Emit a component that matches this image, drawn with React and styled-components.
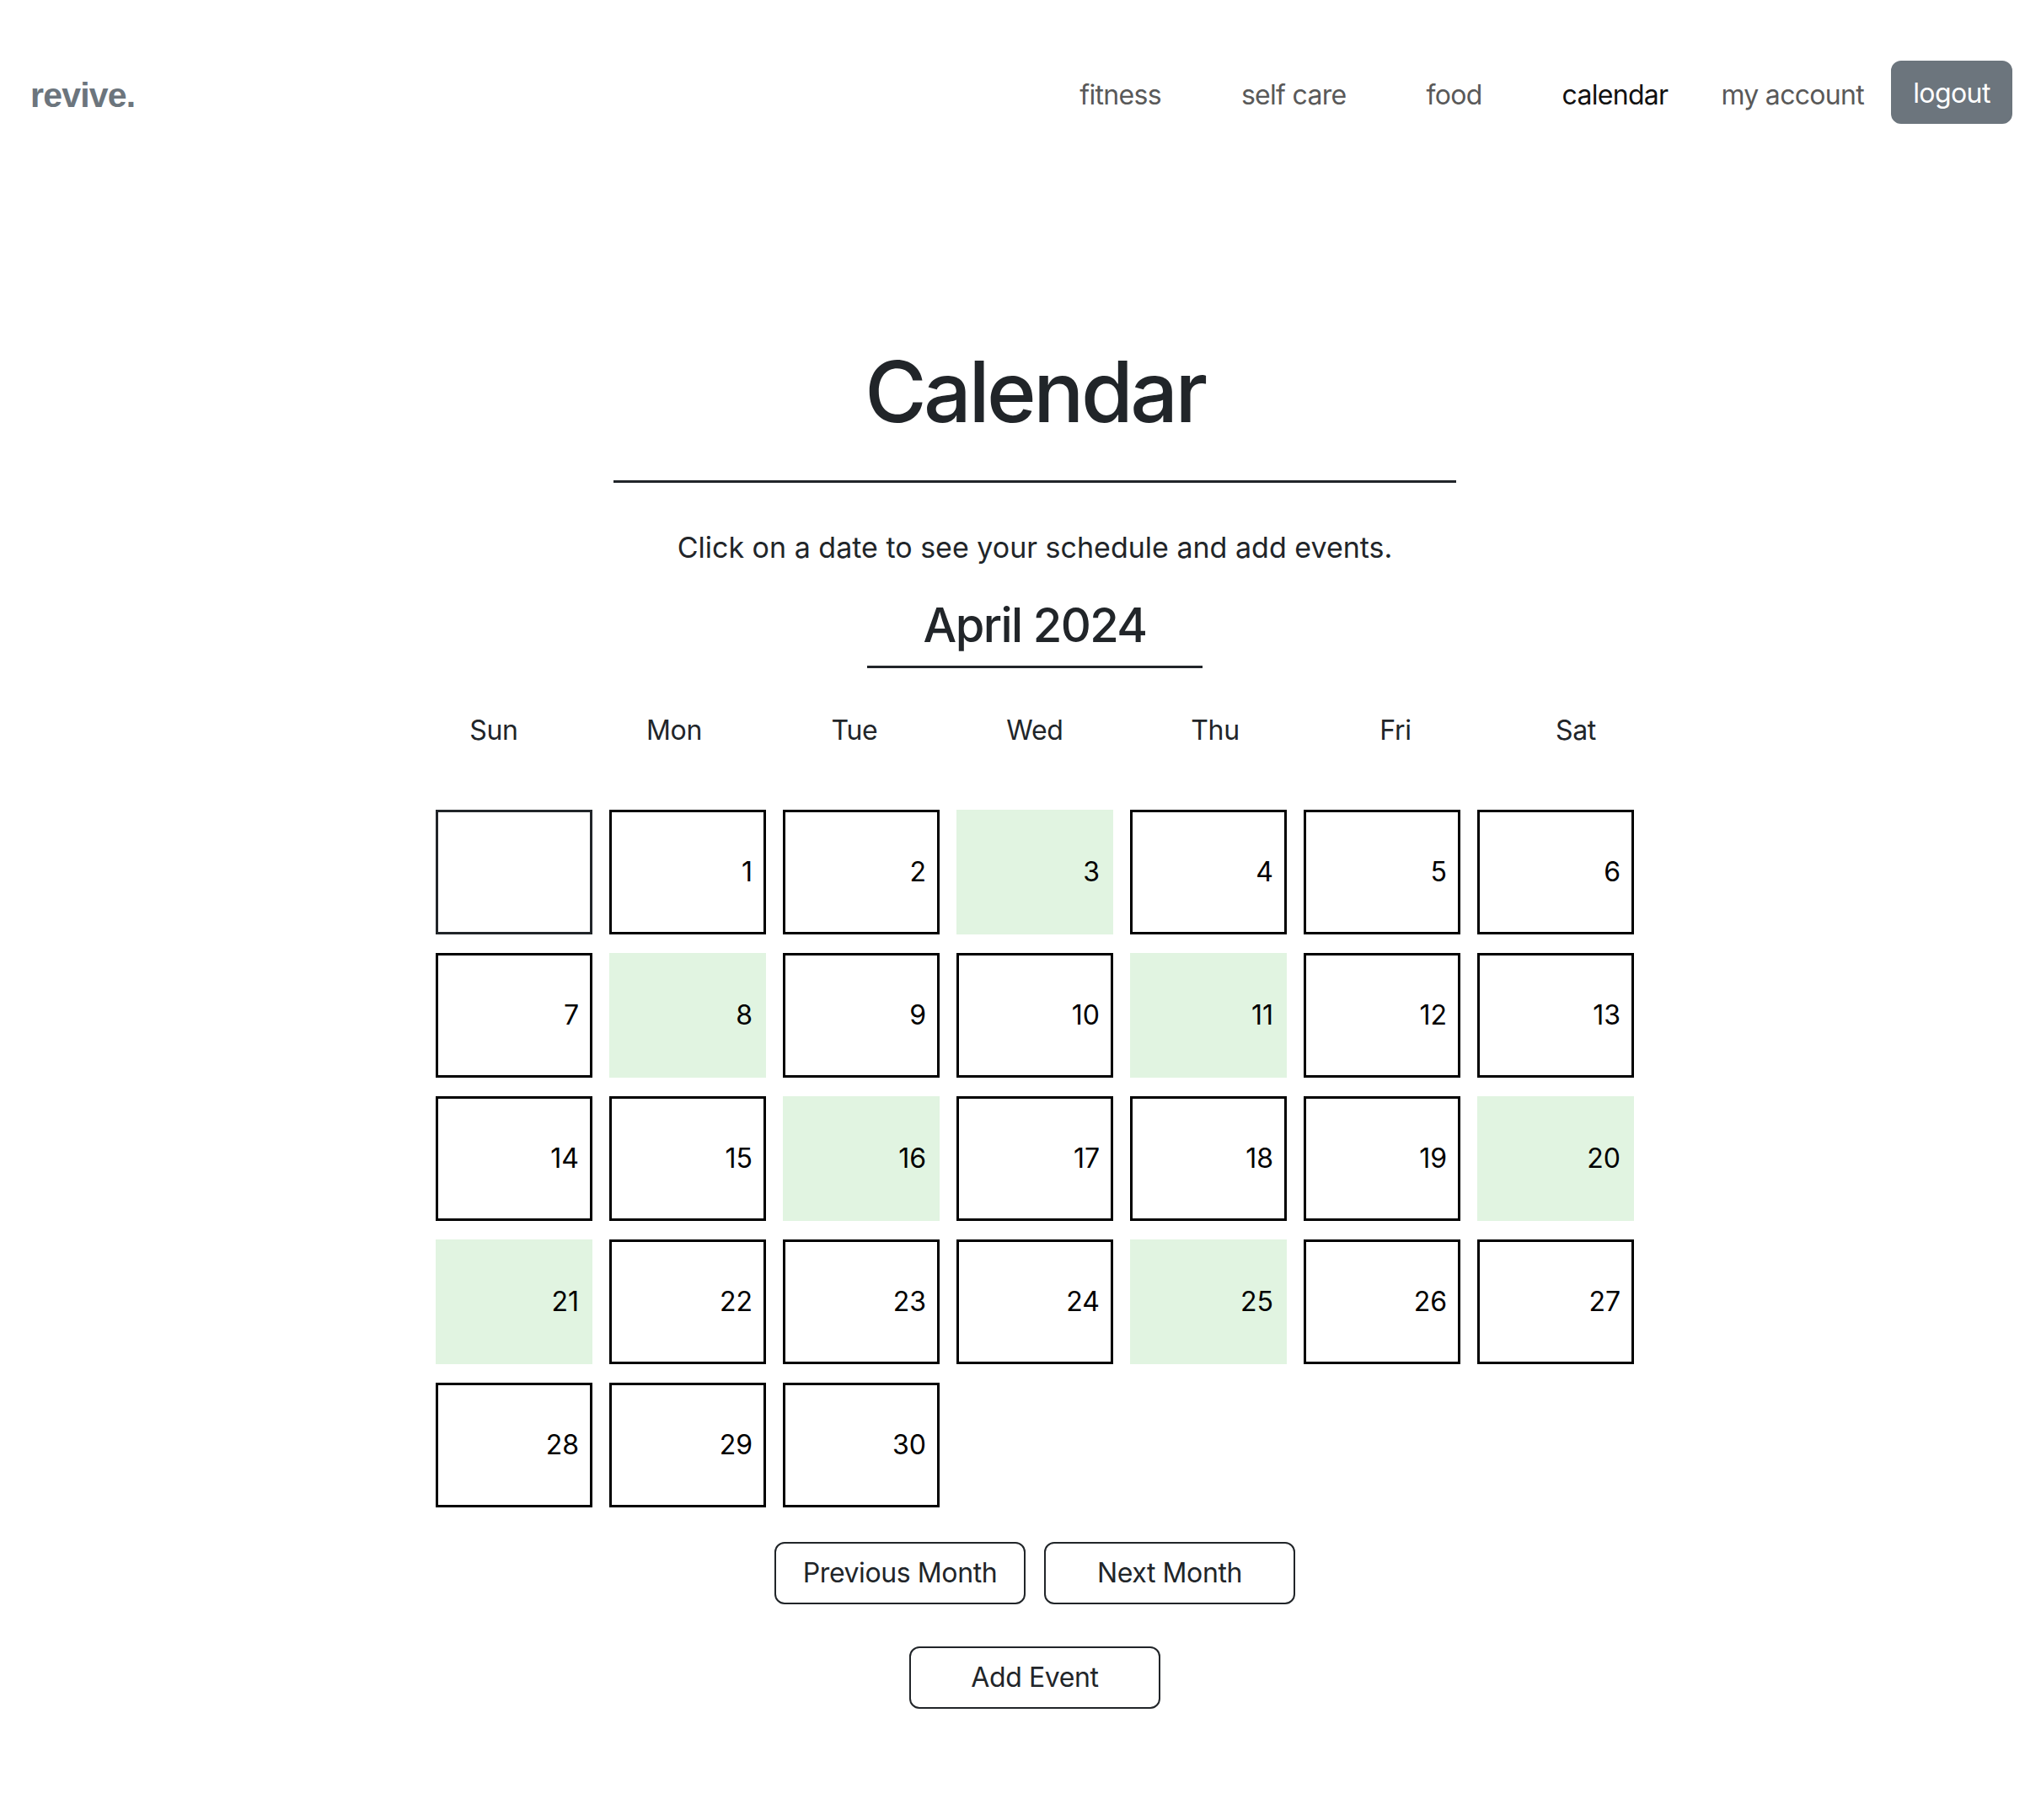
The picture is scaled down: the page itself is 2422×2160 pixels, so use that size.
import React from "react";
import styled, { createGlobalStyle } from "styled-components";

const Global = createGlobalStyle`
  html, body { margin: 0; padding: 0; background: #fff; }
  body {
    font-family: Inter, "Noto Sans", "Liberation Sans", sans-serif;
    color: #212529;
    font-size: 32px;
    line-height: 1.5;
  }
  * { box-sizing: border-box; }
`;

const Page = styled.div`
  width: 2422px;
  min-height: 2160px;
`;

const Navbar = styled.nav`
  display: flex;
  align-items: center;
  justify-content: space-between;
  padding: 72px 34px 0 36px;
`;

const Brand = styled.a`
  font-family: "Liberation Sans", Arial, sans-serif;
  font-weight: 700;
  font-size: 41px;
  letter-spacing: -0.8px;
  color: #6c757d;
  text-decoration: none;
  line-height: 1;
  margin-top: 8px;
`;

const NavList = styled.ul`
  display: flex;
  align-items: center;
  list-style: none;
  margin: 0;
  padding: 0;
`;

const NavItem = styled.li`
  margin-right: ${(p) => p.$after}px;
  padding-top: ${(p) => (p.$button ? 0 : 7)}px;
`;

const NavLink = styled.a`
  font-size: 32px;
  letter-spacing: -0.7px;
  color: ${(p) => (p.$active ? "#111" : "#595959")};
  text-decoration: none;
`;

const LogoutButton = styled.button`
  font-family: inherit;
  font-size: 32px;
  letter-spacing: -0.6px;
  line-height: 1.5;
  color: #fff;
  background: #6c757d;
  border: 2px solid #6c757d;
  border-radius: 12px;
  width: 144px;
  height: 75px;
  padding: 3px 0 0;
`;

const Main = styled.main`
  display: flex;
  flex-direction: column;
  align-items: center;
  padding-left: 34px;
`;

const Title = styled.h1`
  margin: 258px 0 0;
  font-size: 100px;
  font-weight: 500;
  line-height: 1.2;
  letter-spacing: -3.5px;
  color: #212529;
`;

const Rule = styled.hr`
  width: 1000px;
  margin: 45px 0 0;
  border: none;
  border-top: 3px solid #212529;
  opacity: 1;
`;

const Lead = styled.p`
  margin: 51px 0 0;
  font-size: 34px;
  color: #212529;
`;

const MonthTitle = styled.h2`
  margin: 34px 0 0;
  width: 398px;
  text-align: center;
  font-size: 56px;
  font-weight: 500;
  line-height: 1.2;
  letter-spacing: -1.6px;
  padding-bottom: 14px;
  border-bottom: 3px solid #212529;
  color: #212529;
`;

const WeekHeader = styled.div`
  display: grid;
  grid-template-columns: repeat(7, 214px);
  margin-top: 50px;
`;

const WeekDay = styled.div`
  text-align: center;
  font-size: 32px;
  letter-spacing: -0.3px;
  color: #212529;
`;

const DayGrid = styled.div`
  display: grid;
  grid-template-columns: repeat(7, 186px);
  grid-auto-rows: 148px;
  column-gap: 20px;
  row-gap: 22px;
  margin-top: 70px;
`;

const DayCell = styled.div`
  display: flex;
  align-items: center;
  justify-content: flex-end;
  padding-right: 13px;
  font-size: 32px;
  color: #000;
  background: ${(p) => (p.$event ? "#e1f4e1" : "#fff")};
  border: 3px solid
    ${(p) => (p.$event ? "#e1f4e1" : p.$blank ? "#212529" : "#000")};
`;

const ButtonRow = styled.div`
  display: flex;
  gap: 22px;
  margin-top: ${(p) => p.$top}px;
`;

const OutlineButton = styled.button`
  font-family: inherit;
  font-size: 32px;
  letter-spacing: -0.4px;
  line-height: 1.5;
  color: #212529;
  background: #fff;
  border: 2px solid #212529;
  border-radius: 12px;
  width: 298px;
  height: 74px;
  padding: 0;
`;

const navItems = [
  { label: "fitness", after: 95 },
  { label: "self care", after: 95 },
  { label: "food", after: 95 },
  { label: "calendar", after: 63, active: true },
  { label: "my account", after: 32 },
];

const weekdays = ["Sun", "Mon", "Tue", "Wed", "Thu", "Fri", "Sat"];
const eventDays = new Set([3, 8, 11, 16, 20, 21, 25]);

export default function App() {
  const cells = [null];
  for (let d = 1; d <= 30; d++) cells.push(d);

  return (
    <Page>
      <Global />
      <Navbar>
        <Brand href="#">revive.</Brand>
        <NavList>
          {navItems.map((n) => (
            <NavItem key={n.label} $after={n.after}>
              <NavLink href="#" $active={n.active}>
                {n.label}
              </NavLink>
            </NavItem>
          ))}
          <NavItem $after={0} $button>
            <LogoutButton>logout</LogoutButton>
          </NavItem>
        </NavList>
      </Navbar>
      <Main>
        <Title>Calendar</Title>
        <Rule />
        <Lead>Click on a date to see your schedule and add events.</Lead>
        <MonthTitle>April 2024</MonthTitle>
        <WeekHeader>
          {weekdays.map((w) => (
            <WeekDay key={w}>{w}</WeekDay>
          ))}
        </WeekHeader>
        <DayGrid>
          {cells.map((d, i) => (
            <DayCell key={i} $blank={d === null} $event={eventDays.has(d)}>
              {d}
            </DayCell>
          ))}
        </DayGrid>
        <ButtonRow $top={41}>
          <OutlineButton>Previous Month</OutlineButton>
          <OutlineButton>Next Month</OutlineButton>
        </ButtonRow>
        <ButtonRow $top={50}>
          <OutlineButton>Add Event</OutlineButton>
        </ButtonRow>
      </Main>
    </Page>
  );
}
